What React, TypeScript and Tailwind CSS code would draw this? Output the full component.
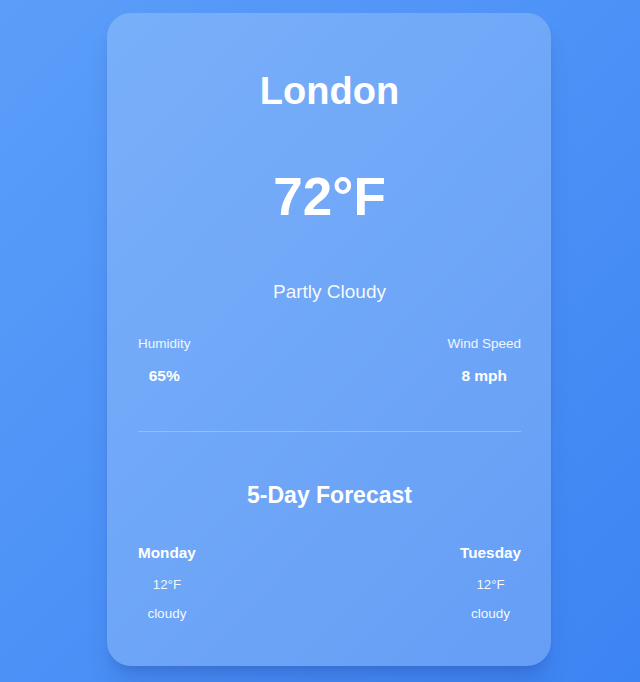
import React from "react";

type Day = { name: string; temp: string; desc: string };

const forecast: Day[] = [
  { name: "Monday", temp: "12°F", desc: "cloudy" },
  { name: "Tuesday", temp: "12°F", desc: "cloudy" },
];

export default function App() {
  return (
    <main
      className="min-h-screen w-full bg-linear-to-br from-[#5b9ef9] to-[#3d84f3] pt-[13px] pb-[17px] text-white"
      style={{ fontFamily: '"Liberation Sans", Arial, sans-serif' }}
    >
      <div className="ml-[107px] w-[444px] rounded-3xl bg-white/20 pl-[31px] pr-[30px] pt-8 pb-[42px] shadow-xl shadow-blue-900/20">
        <h1 className="mt-[24px] text-center text-[38px] font-bold leading-[44px]">London</h1>

        <div className="mt-[54px] text-center text-[53px] font-bold leading-[60px]">72°F</div>

        <div className="mt-[53px] text-center text-[19px] leading-[24px] text-white/95">Partly Cloudy</div>

        <div className="mt-[30px] flex justify-between">
          <div className="flex flex-col items-center">
            <span className="text-[13.5px] leading-[20px] text-white/90">Humidity</span>
            <span className="mt-3 text-[15.5px] font-bold leading-[20px]">65%</span>
          </div>
          <div className="flex flex-col items-center">
            <span className="text-[13.5px] leading-[20px] text-white/90">Wind Speed</span>
            <span className="mt-3 text-[15.5px] font-bold leading-[20px]">8 mph</span>
          </div>
        </div>

        <div className="mt-[45px] h-px bg-white/25" />

        <h2 className="mt-[48px] text-center text-[23px] font-bold leading-[30px]">5-Day Forecast</h2>

        <div className="mt-[33px] flex justify-between">
          {forecast.map((d) => (
            <div key={d.name} className="flex flex-col items-center">
              <span className="text-[15.3px] font-bold leading-[20px]">{d.name}</span>
              <span className="mt-3 text-[13.3px] leading-[20px] text-white/95">{d.temp}</span>
              <span className="mt-[9px] text-[13.5px] leading-[20px] text-white/95">{d.desc}</span>
            </div>
          ))}
        </div>
      </div>
    </main>
  );
}
